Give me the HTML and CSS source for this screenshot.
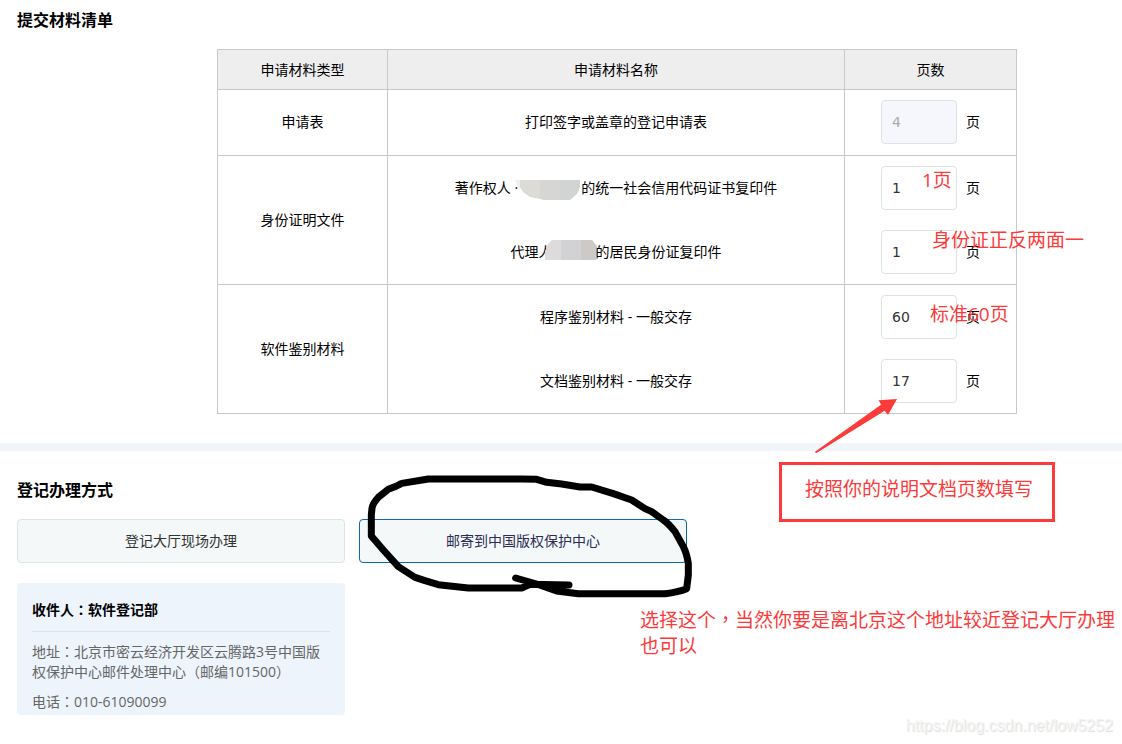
FILE: index.html
```html
<!DOCTYPE html>
<html lang="zh-CN">
<head>
<meta charset="utf-8">
<meta name="viewport" content="width=device-width, initial-scale=1">
<title>提交材料清单</title>
<link rel="stylesheet" href="styles.css">
</head>
<body>
<main class="page">
  <section class="section">
    <h2 class="section-title">提交材料清单</h2>
    <table class="materials">
      <colgroup><col class="col-type"><col class="col-name"><col class="col-pages"></colgroup>
      <thead>
        <tr><th scope="col">申请材料类型</th><th scope="col">申请材料名称</th><th scope="col">页数</th></tr>
      </thead>
      <tbody>
        <tr class="row-single">
          <td>申请表</td>
          <td>打印签字或盖章的登记申请表</td>
          <td><label class="pages"><input class="pages-input" type="text" value="4" disabled>页</label></td>
        </tr>
      </tbody>
      <tbody>
        <tr>
          <td rowspan="2">身份证明文件</td>
          <td><span class="name">著作权人 ·<svg class="mask mask-owner" viewBox="0 -4 66 24" aria-hidden="true"><path fill="#eff0f0" d="M0 0h6v9H4z"/><path fill="#dcdbd8" d="M5 0h20v19l-10-2-7-5-3-5z"/><path fill="#d6d6d4" d="M25 0h20v20H29l-4-1z"/><path fill="#d2d4d4" d="M45 0h20v7l-3 7-7 6H45z"/></svg>的统一社会信用代码证书复印件</span></td>
          <td><label class="pages"><input class="pages-input" type="text" value="1">页</label></td>
        </tr>
        <tr>
          <td><span class="name">代理人<svg class="mask mask-agent" viewBox="0 0 53 24" aria-hidden="true"><path fill="#dddbdc" d="M7 0h9v20H0v-9l3-7z"/><path fill="#d2d2d4" d="M16 0h20v20H16z"/><path fill="#cdc9c7" d="M36 0h11l5 6 1 6-2 8H36z"/></svg>的居民身份证复印件</span></td>
          <td><label class="pages"><input class="pages-input" type="text" value="1">页</label></td>
        </tr>
      </tbody>
      <tbody>
        <tr>
          <td rowspan="2">软件鉴别材料</td>
          <td>程序鉴别材料 - 一般交存</td>
          <td><label class="pages"><input class="pages-input" type="text" value="60">页</label></td>
        </tr>
        <tr>
          <td>文档鉴别材料 - 一般交存</td>
          <td><label class="pages"><input class="pages-input" type="text" value="17">页</label></td>
        </tr>
      </tbody>
    </table>
  </section>

  <section class="section section-method">
    <h2 class="section-title">登记办理方式</h2>
    <div class="options">
      <button class="option" type="button">登记大厅现场办理</button>
      <button class="option option-selected" type="button">邮寄到中国版权保护中心</button>
    </div>
    <div class="recipient">
      <h3 class="recipient-title">收件人<span class="mid" lang="zh-TW">：</span>软件登记部</h3>
      <p class="recipient-line">地址<span class="mid" lang="zh-TW">：</span>北京市密云经济开发区云腾路3号中国版权保护中心邮件处理中心（邮编101500）</p>
      <p class="recipient-line">电话<span class="mid" lang="zh-TW">：</span>010-61090099</p>
    </div>
  </section>

  <p class="note note-owner">1页</p>
  <p class="note note-agent">身份证正反两面一</p>
  <p class="note note-program">标准60页</p>
  <p class="note note-boxed">按照你的说明文档页数填写</p>
  <p class="note note-choice">选择这个<span class="mid" lang="zh-TW">，</span>当然你要是离北京这个地址较近登记大厅办理也可以</p>
  <svg class="arrow" viewBox="0 0 246 163" aria-hidden="true"><path d="M0 158 198 17 191 4 246 0 219 48 209 35 3 163z"/></svg>
  <svg class="scribble" viewBox="0 0 1080 450" aria-hidden="true"><path d="M497 354 560 372 620 393 685 401H945Q985 396 1010 386L1015 345V310Q1010 280 1000 260L975 215Q955 190 940 180L905 155 885 146 845 120 790 101 725 81H690L635 72 590 67 560 58 515 57H235L155 70 140 78 115 88 85 112Q68 130 66 145L64 165V228L100 270 145 320 195 352 225 362 265 374 355 384H515L540 373 657 375"/></svg>
  <p class="watermark">https://blog.csdn.net/low5252</p>
</main>
</body>
</html>
```
FILE: styles.css
```css
* {
  box-sizing: border-box;
}

body {
  margin: 0;
  background: #fff;
  color: #000;
  font: 14px/20px "Open Sans", "Noto Sans CJK SC", sans-serif;
}

h2, h3, p {
  margin: 0;
}

.page {
  position: relative;
  min-height: 100vh;
}

.section {
  padding: 10px 17px 29px;
}

.section-method {
  padding-top: 29px;
  border-top: 8px solid #f1f5f9;
}

.section-title {
  margin-bottom: 19px;
  font-size: 16px;
  line-height: 20px;
  font-weight: 700;
}

/* Materials table */
.materials {
  width: 800px;
  margin-left: 200px;
  table-layout: fixed;
  border-collapse: separate;
  border-spacing: 0;
  border: solid #c8c8c8;
  border-width: 1px 0 0 1px;
}

.col-type { width: 170px; }
.col-pages { width: 172px; }

.materials th,
.materials td {
  padding: 10px 0;
  border-right: 1px solid #c8c8c8;
  text-align: center;
  font-weight: 400;
}

.materials th {
  padding: 10px 0 9px;
  background: #eee;
  border-bottom: 1px solid #c8c8c8;
}

.materials .row-single td {
  padding-bottom: 11px;
}

.materials tbody tr:last-child td,
.materials td[rowspan] {
  border-bottom: 1px solid #c8c8c8;
}

.name {
  display: inline-flex;
  align-items: center;
  white-space: pre;
}

.mask {
  height: 24px;
  flex: none;
}

.mask-owner {
  width: 66px;
  margin-left: -3px;
}

.mask-agent {
  width: 53px;
  margin-left: -8px;
  margin-right: -2px;
}

.pages {
  display: flex;
  align-items: center;
  justify-content: center;
  gap: 9px;
}

.pages-input {
  width: 76px;
  height: 44px;
  padding: 0 10px;
  border: 1px solid #dce4e4;
  border-radius: 4px;
  background: #fff;
  color: #333;
  font: 14px/20px "DejaVu Sans", sans-serif;
}

.pages-input:disabled {
  background: #f5f7fc;
  color: #aaa;
}

/* Handling method */
.options {
  display: flex;
  gap: 14px;
  margin-bottom: 20px;
}

.option {
  width: 328px;
  height: 44px;
  border: 1px solid #dce5e4;
  border-radius: 4px;
  background: #f4f8f9;
  color: #333;
  font: inherit;
}

.option-selected {
  border-color: #0b67b2;
  color: #2b2b55;
}

.recipient {
  width: 328px;
  padding: 17px 15px 3px;
  border-radius: 4px;
  background: #edf4fb;
  color: #666;
}

.recipient-title {
  padding-bottom: 11px;
  border-bottom: 1px solid #d9e3e5;
  color: #000;
  font-size: 14px;
  line-height: 20px;
}

.recipient-line {
  margin-top: 10px;
}

/* Centred full-width punctuation */
.mid {
  font-family: "Noto Sans CJK TC", sans-serif;
  line-height: 1;
}

/* Annotations over the form */
.note {
  position: absolute;
  color: #fc3a3a;
  font-size: 19px;
  line-height: 26px;
}

.note-owner { left: 922px; top: 167px; }
.note-agent { left: 932px; top: 227px; }
.note-program { left: 930px; top: 301px; }

.note-boxed {
  left: 779px;
  top: 462px;
  padding: 11px 19px 17px 23px;
  border: 3px solid #fc3a3a;
}

.note-choice {
  left: 640px;
  top: 607px;
  width: 480px;
}

.arrow {
  position: absolute;
  left: 815px;
  top: 399px;
  width: 82px;
  fill: #fc3a3a;
}

.scribble {
  position: absolute;
  left: 350px;
  top: 460px;
  width: 360px;
  fill: none;
  stroke: #000;
  stroke-width: 21;
  stroke-linecap: round;
  stroke-linejoin: round;
  pointer-events: none;
}

.watermark {
  position: absolute;
  right: 9px;
  bottom: 8px;
  color: #f4f4f4;
  font: 16px/20px "Liberation Sans", sans-serif;
  text-shadow: 1px 1px 1px #ddd;
}
```
